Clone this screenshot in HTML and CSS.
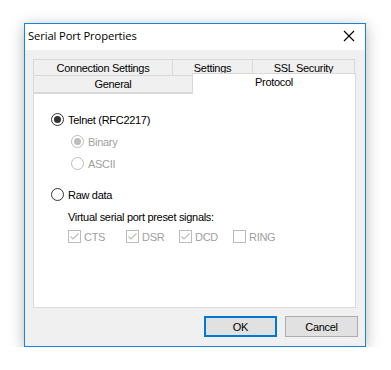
FILE: index.html
```html
<!DOCTYPE html>
<html>
<head>
<meta charset="utf-8">
<link rel="stylesheet" href="styles.css">
</head>
<body>
<div class="window">
  <div class="titlebar">
    <span class="title">Serial Port Properties</span>
    <svg class="close" width="12" height="12" viewBox="0 0 12 12"><path d="M1 1L11 11M11 1L1 11" stroke="#000" stroke-width="1.1" fill="none"/></svg>
  </div>
  <div class="body">
    <div class="tabs">
      <div class="tabrow back">
        <div class="tab w1">Connection Settings</div>
        <div class="tab w2">Settings</div>
        <div class="tab w3">SSL Security</div>
      </div>
      <div class="tabrow front">
        <div class="tab w4">General</div>
        <div class="tab w5 active">Protocol</div>
      </div>
    </div>
    <div class="panel">
      <div class="opt main">
        <span class="radio checked"></span><span>Telnet (RFC2217)</span>
      </div>
      <div class="opt sub disabled">
        <span class="radio checked"></span><span>Binary</span>
      </div>
      <div class="opt sub disabled">
        <span class="radio"></span><span>ASCII</span>
      </div>
      <div class="opt main raw">
        <span class="radio"></span><span>Raw data</span>
      </div>
      <div class="label">Virtual serial port preset signals:</div>
      <div class="checks">
        <div class="chk c1"><span class="box"><svg width="11" height="11" viewBox="0 0 11 11"><path d="M1.5 5.5L4 8L9.5 2.5" stroke="#bcbcbc" stroke-width="1.2" fill="none"/></svg></span><span>CTS</span></div>
        <div class="chk c2"><span class="box"><svg width="11" height="11" viewBox="0 0 11 11"><path d="M1.5 5.5L4 8L9.5 2.5" stroke="#bcbcbc" stroke-width="1.2" fill="none"/></svg></span><span>DSR</span></div>
        <div class="chk c3"><span class="box"><svg width="11" height="11" viewBox="0 0 11 11"><path d="M1.5 5.5L4 8L9.5 2.5" stroke="#bcbcbc" stroke-width="1.2" fill="none"/></svg></span><span>DCD</span></div>
        <div class="chk c4"><span class="box"></span><span>RING</span></div>
      </div>
    </div>
    <div class="buttons">
      <button class="btn default">OK</button>
      <button class="btn">Cancel</button>
    </div>
  </div>
</div>
</body>
</html>
```
FILE: styles.css
```css
html, body {
  margin: 0;
  padding: 0;
  background: #fff;
}
body {
  padding: 23px 0 0 24px;
  font-family: "Liberation Sans", Arial, sans-serif;
  font-size: 11px;
  letter-spacing: -0.3px;
  color: #000;
}
.window {
  width: 340px;
  height: 322px;
  border: 1px solid #1883d7;
  background: #f0f0f0;
  box-shadow: 0 3px 14px rgba(0,0,0,0.28);
  display: flex;
  flex-direction: column;
}
.titlebar {
  height: 26px;
  background: #fff;
  display: flex;
  align-items: center;
  justify-content: space-between;
  padding: 0 10px 0 3px;
}
.title {
  font-family: "Open Sans", "Noto Sans", sans-serif;
  font-size: 11.2px;
  letter-spacing: -0.1px;
  position: relative;
  top: -2px;
}
.close {
  position: relative;
  top: -1px;
}
.body {
  padding: 9px 0 0 8px;
  display: flex;
  flex-direction: column;
}
.tabs {
  display: flex;
  flex-direction: column;
  width: 323px;
}
.tabrow {
  display: flex;
  height: 17px;
}
.tabrow.front {
  height: 18px;
  margin-top: -1px;
}
.tab {
  box-sizing: border-box;
  border: 1px solid #d9d9d9;
  background: #f0f0f0;
  text-align: center;
  line-height: 16px;
  margin-right: -1px;
  height: 18px;
}
.w1 { width: 140px; }
.w2 { width: 81px; }
.w3 { width: 103px; }
.w4 { width: 160px; }
.w5 { width: 164px; }
.tab.active {
  background: #fff;
  height: 21px;
  margin-top: -2px;
  border-bottom: none;
  position: relative;
  z-index: 2;
  line-height: 17px;
}
.panel {
  box-sizing: border-box;
  width: 323px;
  height: 215px;
  background: #fff;
  border: 1px solid #d9d9d9;
  position: relative;
  z-index: 1;
  padding: 19px 0 0 17px;
}
.opt {
  display: flex;
  align-items: center;
  height: 13px;
}
.opt .radio { margin-right: 4px; }
.opt.sub {
  margin-left: 20px;
  margin-top: 9px;
}
.opt.main.raw { margin-top: 18px; }
.radio {
  box-sizing: border-box;
  width: 13px;
  height: 13px;
  border-radius: 50%;
  border: 1px solid #333;
  background: #fff;
  display: inline-flex;
  align-items: center;
  justify-content: center;
  flex: none;
}
.radio.checked::after {
  content: "";
  width: 7px;
  height: 7px;
  border-radius: 50%;
  background: #333;
}
.disabled { color: #a0a0a0; }
.disabled .radio { border-color: #bcbcbc; }
.disabled .radio.checked::after { background: #bcbcbc; }
.label {
  margin: 10px 0 0 17px;
  height: 13px;
  line-height: 13px;
}
.checks {
  display: flex;
  margin: 6px 0 0 17px;
  color: #a0a0a0;
}
.chk {
  display: flex;
  align-items: center;
  height: 13px;
}
.chk .box {
  box-sizing: border-box;
  width: 13px;
  height: 13px;
  border: 1px solid #bcbcbc;
  display: inline-flex;
  align-items: center;
  justify-content: center;
  margin-right: 3px;
}
.c1 { width: 58px; }
.c2 { width: 53px; }
.c3 { width: 54px; }
.buttons {
  display: flex;
  justify-content: flex-end;
  gap: 8px;
  padding: 8px 7px 0 0;
}
.btn {
  box-sizing: border-box;
  width: 73px;
  height: 21px;
  font-family: "Liberation Sans", Arial, sans-serif;
  font-size: 11px;
  letter-spacing: -0.3px;
  background: #e1e1e1;
  border: 1px solid #adadad;
  color: #000;
  padding: 0;
  margin: 0;
}
.btn.default {
  border: 2px solid #0078d7;
}
```
